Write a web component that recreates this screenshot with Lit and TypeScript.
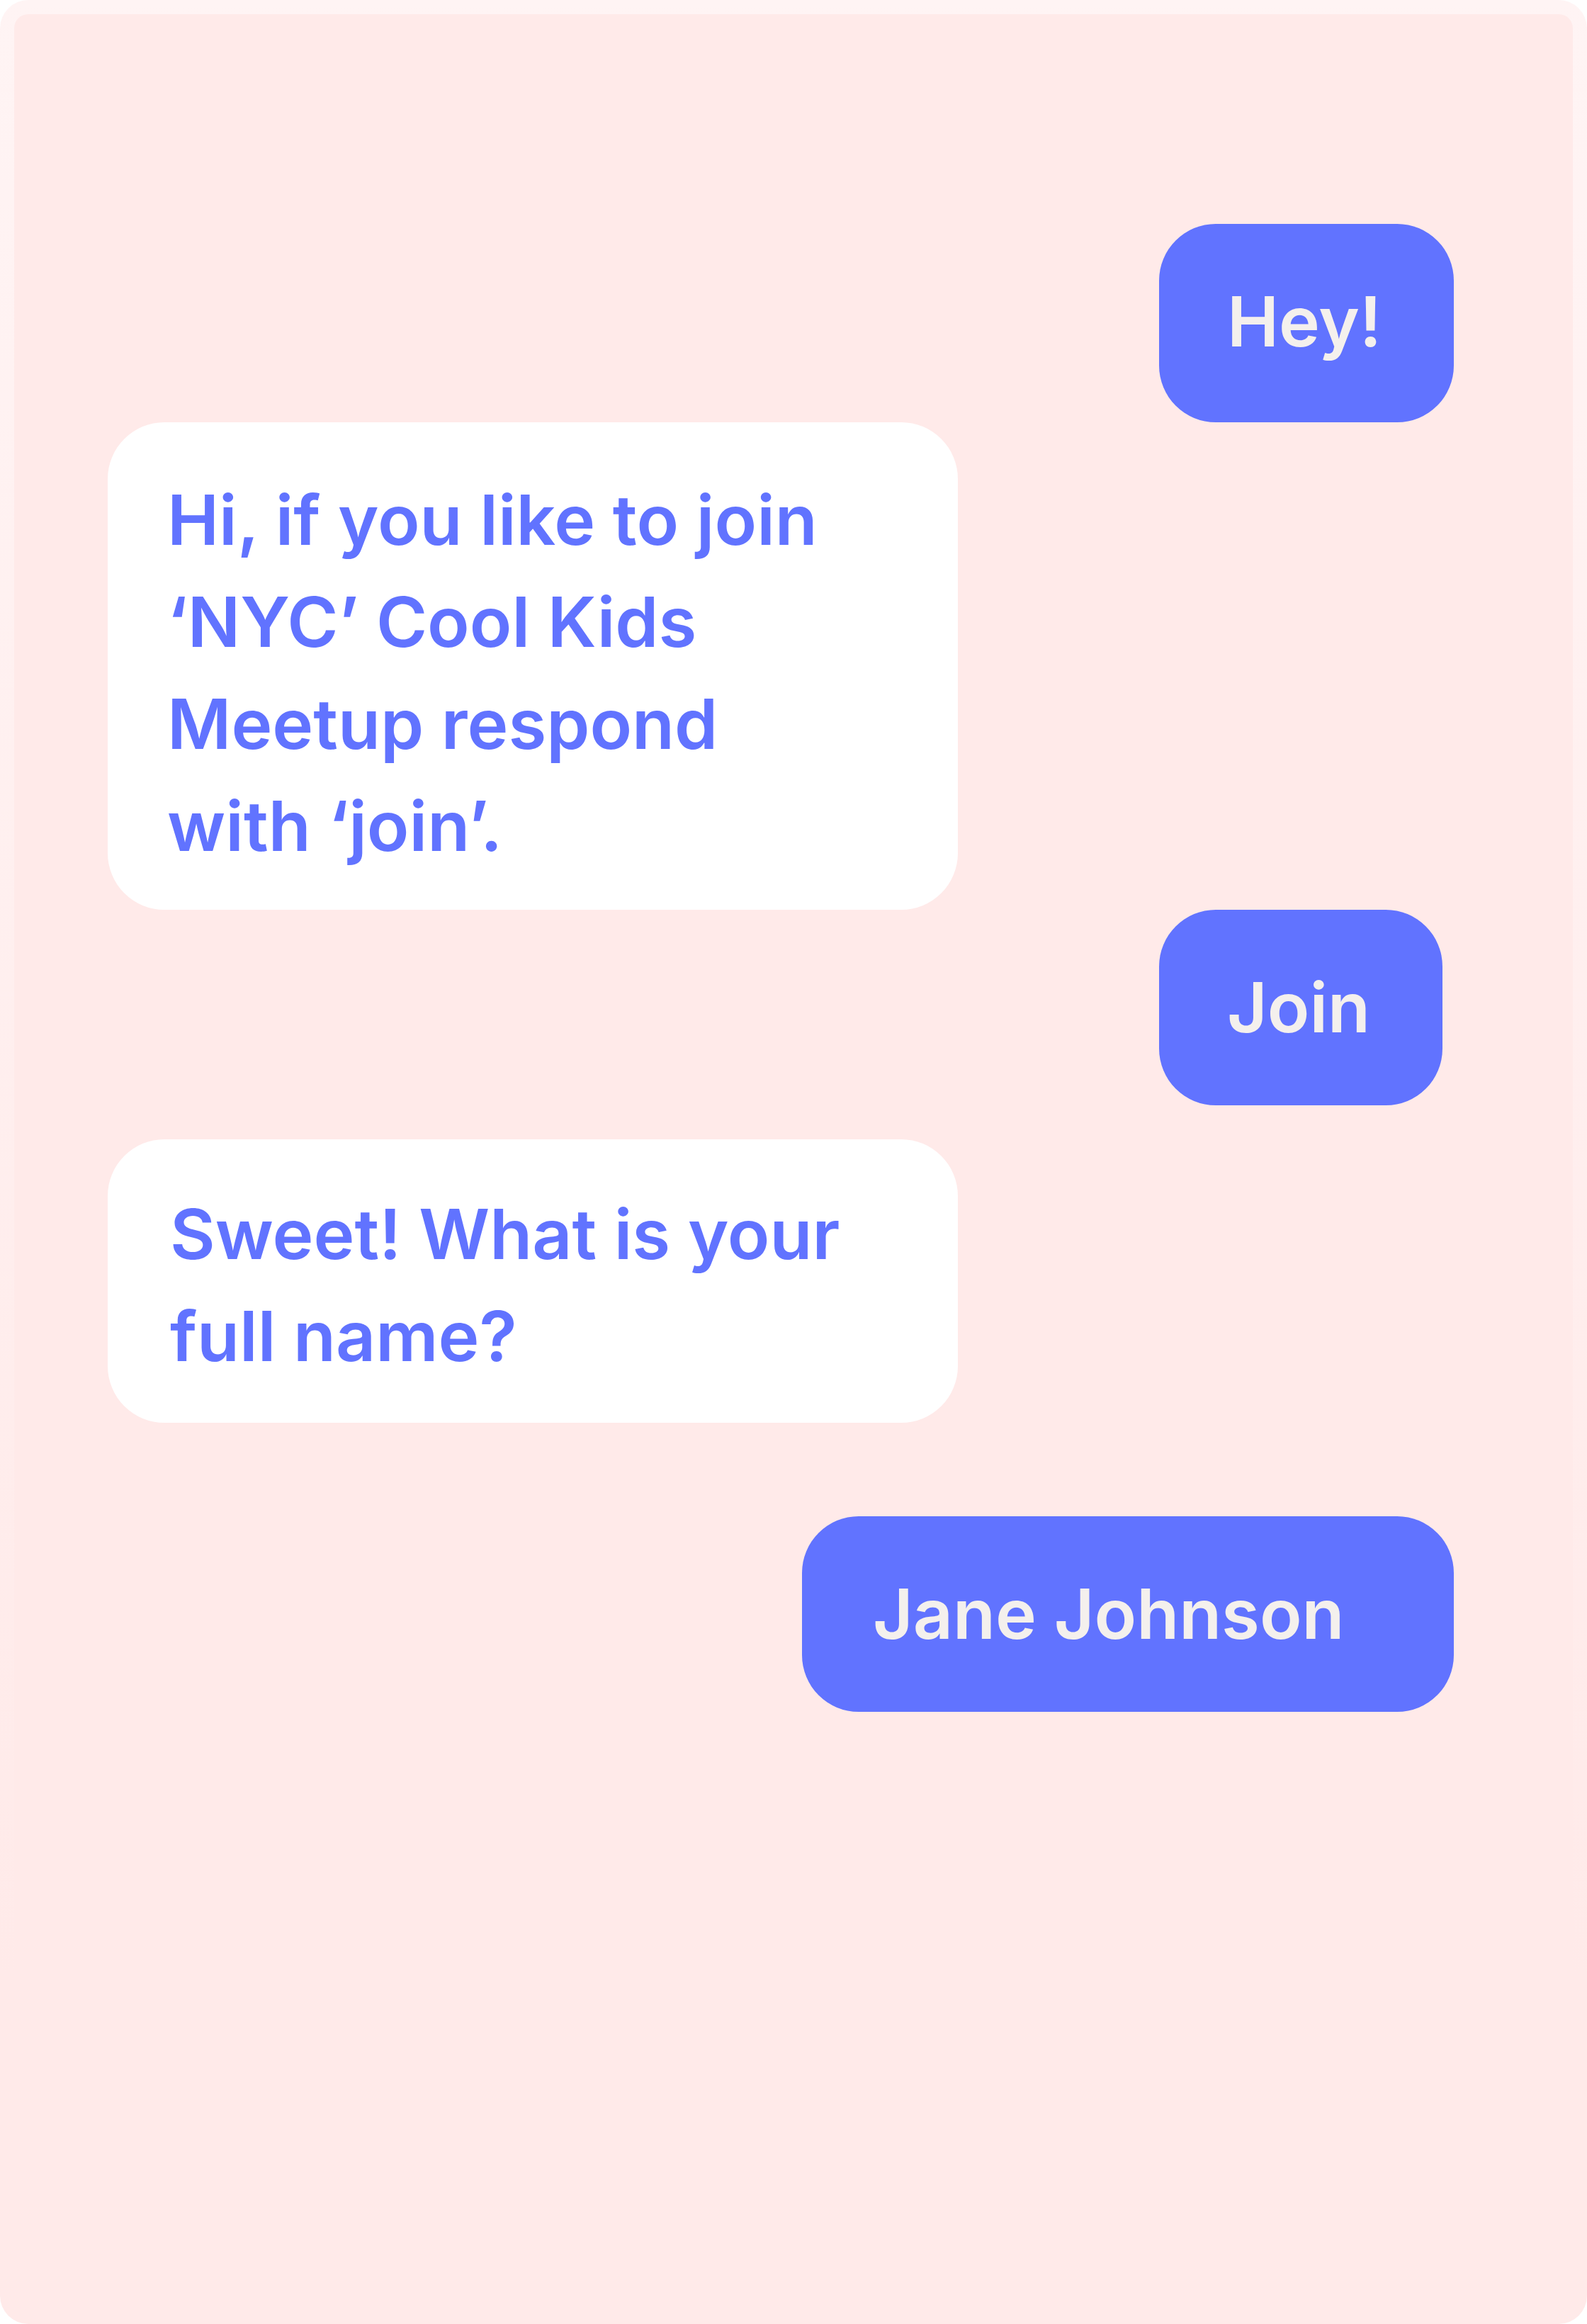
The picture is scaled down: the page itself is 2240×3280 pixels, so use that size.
import { LitElement, html, css } from "lit";
import { customElement, property } from "lit/decorators.js";

interface Message {
  kind: "sent" | "received";
  slot: string;
  lines: string[];
}

const MESSAGES: Message[] = [
  { kind: "sent", slot: "greeting", lines: ["Hey!"] },
  {
    kind: "received",
    slot: "invite",
    lines: ["Hi, if you like to join", "‘NYC’ Cool Kids", "Meetup respond", "with ‘join’."],
  },
  { kind: "sent", slot: "reply", lines: ["Join"] },
  { kind: "received", slot: "question", lines: ["Sweet! What is your", "full name?"] },
  { kind: "sent", slot: "name", lines: ["Jane Johnson"] },
];

@customElement("chat-bubble")
export class ChatBubble extends LitElement {
  @property({ attribute: false }) lines: string[] = [];

  static styles = css`
    :host {
      display: block;
      box-sizing: border-box;
      max-width: 100%;
      border-radius: 80px;
    }
    .text {
      margin: 0;
      white-space: nowrap;
    }
  `;

  render() {
    return html`<p class="text">
      ${this.lines.map((line, i) => (i ? html`<br />${line}` : line))}
    </p>`;
  }
}

@customElement("app-root")
export class AppRoot extends LitElement {
  static styles = css`
    :host {
      display: block;
      background: #ffffff;
      font-family: Inter, "Liberation Sans", sans-serif;
      font-size: 98px;
      font-weight: 600;
      line-height: 144px;
    }
    .frame {
      box-sizing: border-box;
      display: flex;
      min-height: 100vh;
      padding: 20px;
      border-radius: 40px;
      background: linear-gradient(#fff4f4, #ffeae9 85%);
    }
    .chat {
      flex: 1;
      display: flex;
      flex-direction: column;
      padding: 296px 168px 80px 132px;
      border-radius: 20px;
      background: #ffeae9;
    }
    .sent {
      align-self: flex-end;
      padding: 66px 96px;
      background: #6173ff;
      color: #f4f0ed;
    }
    .received {
      align-self: flex-start;
      width: 1200px;
      background: #ffffff;
      color: #6173ff;
    }
    .greeting {
      width: 416px;
      padding-bottom: 70px;
    }
    .invite {
      padding: 66px 84px 46px;
    }
    .reply {
      width: 400px;
      margin-right: 16px;
    }
    .question {
      margin-top: 48px;
      padding: 62px 88px 50px;
    }
    .name {
      width: 920px;
      margin-top: 132px;
      padding-left: 100px;
    }
  `;

  render() {
    return html`
      <div class="frame">
        <main class="chat">
          ${MESSAGES.map(
            (m) => html`<chat-bubble class="${m.kind} ${m.slot}" .lines=${m.lines}></chat-bubble>`
          )}
        </main>
      </div>
    `;
  }
}
